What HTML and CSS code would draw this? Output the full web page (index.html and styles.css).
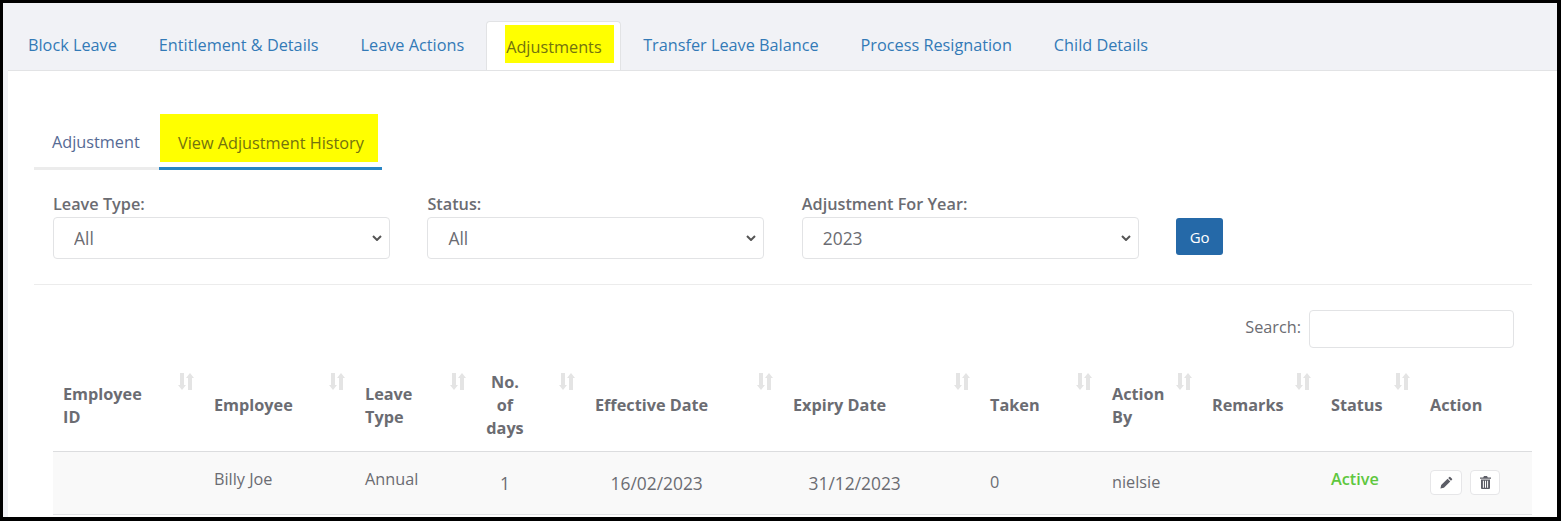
FILE: index.html
```html
<!DOCTYPE html>
<html lang="en">
<head>
    <meta charset="UTF-8">
    <meta name="viewport" content="width=device-width, initial-scale=1.0">
    <title>Adjustments</title>
    <link rel="stylesheet" href="styles.css">
</head>
<body>
    <div class="frame">
        <nav class="main-tabs">
            <a href="#" class="main-tab">Block Leave</a>
            <a href="#" class="main-tab">Entitlement &amp; Details</a>
            <a href="#" class="main-tab">Leave Actions</a>
            <a href="#" class="main-tab active"><span class="marker">Adjustments</span></a>
            <a href="#" class="main-tab">Transfer Leave Balance</a>
            <a href="#" class="main-tab">Process Resignation</a>
            <a href="#" class="main-tab">Child Details</a>
        </nav>

        <main class="panel">
            <div class="sub-tabs">
                <a href="#" class="sub-tab">Adjustment</a>
                <a href="#" class="sub-tab active"><span class="marker">View Adjustment History</span></a>
            </div>

            <form class="filters">
                <div class="field">
                    <label for="leave-type">Leave Type:</label>
                    <select id="leave-type"><option>All</option></select>
                </div>
                <div class="field">
                    <label for="status">Status:</label>
                    <select id="status"><option>All</option></select>
                </div>
                <div class="field">
                    <label for="year">Adjustment For Year:</label>
                    <select id="year"><option>2023</option></select>
                </div>
                <button type="button" class="btn-go">Go</button>
            </form>

            <div class="table-wrap">
                <div class="search-row">
                    <label for="search">Search:</label>
                    <input type="search" id="search" class="search-box">
                </div>

                <svg width="0" height="0" class="defs">
                    <symbol id="sort" viewBox="0 0 16 17">
                        <path d="M2 0h4v12h2l-4 5-4-5h2z"/>
                        <path d="M10 17h4V5h2l-4-5-4 5h2z"/>
                    </symbol>
                </svg>

                <table class="history">
                    <colgroup>
                        <col class="c-id"><col class="c-emp"><col class="c-type"><col class="c-days">
                        <col class="c-eff"><col class="c-exp"><col class="c-taken"><col class="c-by">
                        <col class="c-rem"><col class="c-status"><col class="c-action">
                    </colgroup>
                    <thead>
                        <tr>
                            <th class="narrow">Employee ID<svg class="sort"><use href="#sort"/></svg></th>
                            <th>Employee<svg class="sort"><use href="#sort"/></svg></th>
                            <th>Leave Type<svg class="sort"><use href="#sort"/></svg></th>
                            <th class="days">No. of days<svg class="sort"><use href="#sort"/></svg></th>
                            <th>Effective Date<svg class="sort"><use href="#sort"/></svg></th>
                            <th>Expiry Date<svg class="sort"><use href="#sort"/></svg></th>
                            <th>Taken<svg class="sort"><use href="#sort"/></svg></th>
                            <th>Action By<svg class="sort"><use href="#sort"/></svg></th>
                            <th>Remarks<svg class="sort"><use href="#sort"/></svg></th>
                            <th>Status<svg class="sort"><use href="#sort"/></svg></th>
                            <th>Action</th>
                        </tr>
                    </thead>
                    <tbody>
                        <tr>
                            <td></td>
                            <td class="raised">Billy Joe</td>
                            <td class="raised">Annual</td>
                            <td class="days big">1</td>
                            <td class="date">16/02/2023</td>
                            <td class="date">31/12/2023</td>
                            <td>0</td>
                            <td>nielsie</td>
                            <td></td>
                            <td class="raised active-state">Active</td>
                            <td class="actions">
                                <button type="button" class="btn-icon edit" title="Edit">
                                    <svg width="13" height="13" viewBox="0 0 12 12"><path d="M8.600.9a.6.6 0 0 1 .85 0l1.650 1.650a.6.6 0 0 1 0 .85l-1 1L7.600 1.900zM7 2.500 9.500 5 3.600 10.900.4 11.600l.7-3.200z"/></svg>
                                </button>
                                <button type="button" class="btn-icon trash" title="Delete">
                                    <svg width="11" height="13" viewBox="0 0 11 13"><path d="M4 0h3l.8 1.500H11v1.300H0V1.500h3.200zM1 3.500h9V12a1 1 0 0 1-1 1H2a1 1 0 0 1-1-1zm1.900 1.300v6.900h1V4.800zm2.100 0v6.900h1V4.800zm2.100 0v6.900h1V4.800z" fill-rule="evenodd"/></svg>
                                </button>
                            </td>
                        </tr>
                    </tbody>
                </table>
            </div>
        </main>
    </div>
</body>
</html>
```

FILE: styles.css
```css
:root {
    --link-color: #337ab7;
    --text-color: #6b6c72;
    --line-color: #e2e3e5;
    --marker-text: #73730f;
}

* {
    margin: 0;
    padding: 0;
    box-sizing: border-box;
    font-family: 'Open Sans', sans-serif;
}

body {
    background: #000;
}

.frame {
    height: 521px;
    overflow: hidden;
    display: flex;
    flex-direction: column;
    background: #f1f2f6;
    border-style: solid;
    border-color: #000;
    border-width: 3px 4px 4px 3px;
    color: var(--text-color);
    font-size: 16.25px;
    line-height: 23px;
}

.marker {
    display: block;
    background: #ffff00;
    color: var(--marker-text);
}

/* top tabs */
.main-tabs {
    display: flex;
    align-items: flex-end;
    height: 67px;
    padding-left: 4px;
    flex-shrink: 0;
}

.main-tab {
    padding: 0 21px 13px;
    color: var(--link-color);
    text-decoration: none;
    white-space: nowrap;
}

.main-tab.active {
    width: 135px;
    height: 49px;
    margin: 0 1px 0 1px;
    padding: 3px 6px 0 18px;
    background: #fff;
    border: 1px solid var(--line-color);
    border-bottom: 0;
    border-radius: 4px 4px 0 0;
}

.main-tab.active .marker {
    width: 109px;
    height: 38px;
    padding: 11px 0 0 1px;
}

/* white panel */
.panel {
    flex: 1;
    min-height: 0;
    margin-left: 5px;
    padding: 43px 25px 0 26px;
    background: #fff;
    border-top: 1px solid var(--line-color);
}

.sub-tabs {
    display: flex;
    height: 56px;
}

.sub-tab {
    width: 125px;
    padding: 17px 0 0 18px;
    color: #566a94;
    text-decoration: none;
    border-bottom: 3px solid #ececec;
}

.sub-tab.active {
    width: 223px;
    padding: 0 4px 0 1px;
    border-bottom-color: #2a85c4;
}

.sub-tab.active .marker {
    height: 48px;
    padding: 18px 0 0 18px;
}

/* filters */
.filters {
    display: flex;
    align-items: flex-start;
    gap: 37.4px;
    height: 115px;
    padding: 23px 0 0 19px;
    border-bottom: 1px solid #ececec;
}

.field {
    width: 337px;
}

.field label {
    display: block;
    font-weight: 600;
    line-height: 22px;
    margin-bottom: 2px;
}

.field select {
    appearance: none;
    width: 100%;
    height: 42px;
    padding: 0 16px 0 20px;
    background: #fff url("data:image/svg+xml,%3Csvg xmlns='http://www.w3.org/2000/svg' width='10' height='6'%3E%3Cpath d='M1 1l4 4 4-4' fill='none' stroke='%23555' stroke-width='2'/%3E%3C/svg%3E") no-repeat right 7px center;
    border: 1px solid var(--line-color);
    border-radius: 4px;
    color: var(--text-color);
    font-size: 17.4px;
}

.btn-go {
    width: 47px;
    height: 37px;
    margin-top: 25px;
    background: #2569a8;
    border: 0;
    border-radius: 3px;
    color: #fff;
    font-size: 15px;
}

/* table */
.table-wrap {
    padding-left: 19px;
}

.search-row {
    display: flex;
    justify-content: flex-end;
    align-items: center;
    gap: 8px;
    height: 38px;
    margin-top: 25px;
    padding-right: 18px;
}

.search-row label {
    padding-bottom: 4px;
}

.search-box {
    width: 205px;
    height: 38px;
    border: 1px solid var(--line-color);
    border-radius: 4px;
    background: #fff;
}

.defs {
    position: absolute;
}

.history {
    width: 1479px;
    margin-top: 12px;
    table-layout: fixed;
    border-collapse: collapse;
}

.c-id, .c-emp { width: 151px; }
.c-type { width: 121px; }
.c-days { width: 109px; }
.c-eff { width: 198px; }
.c-exp { width: 197px; }
.c-taken { width: 122px; }
.c-by { width: 100px; }
.c-rem { width: 119px; }
.c-status { width: 99px; }
.c-action { width: 112px; }

.history th {
    position: relative;
    height: 91px;
    padding: 11px 30px 10px 10px;
    text-align: left;
    vertical-align: middle;
    font-weight: 700;
    border-bottom: 1px solid #dcdddf;
}

.history th.narrow {
    padding-right: 60px;
}

.history th:last-child {
    padding-right: 0;
}

.history th.days {
    padding: 10px 61px 10px 10px;
    text-align: center;
}

.sort {
    position: absolute;
    top: 13px;
    right: 10px;
    width: 16px;
    height: 17px;
    fill: #e4e4e4;
}

.history td {
    height: 63px;
    padding: 0 10px;
    background: #f9f9f9;
    border-bottom: 1px solid var(--line-color);
    vertical-align: middle;
}

.history td.raised {
    padding-top: 16px;
    vertical-align: top;
}

.history td.days {
    padding: 2px 61px 0 10px;
    text-align: center;
}

.history td.big {
    font-size: 17.4px;
}

.history td.date {
    padding: 2px 10px 0 25.5px;
    font-size: 17.4px;
}

.history td.active-state {
    color: #5ec73e;
    font-weight: 600;
}

.actions {
    white-space: nowrap;
}

.btn-icon {
    display: inline-flex;
    align-items: center;
    justify-content: center;
    height: 25px;
    background: #fff;
    border: 1px solid #e6e6e8;
    border-radius: 4px;
    vertical-align: middle;
}

.btn-icon svg {
    fill: #5c5d66;
}

.edit {
    width: 32px;
    margin-right: 4px;
}

.trash {
    width: 30px;
}
```
